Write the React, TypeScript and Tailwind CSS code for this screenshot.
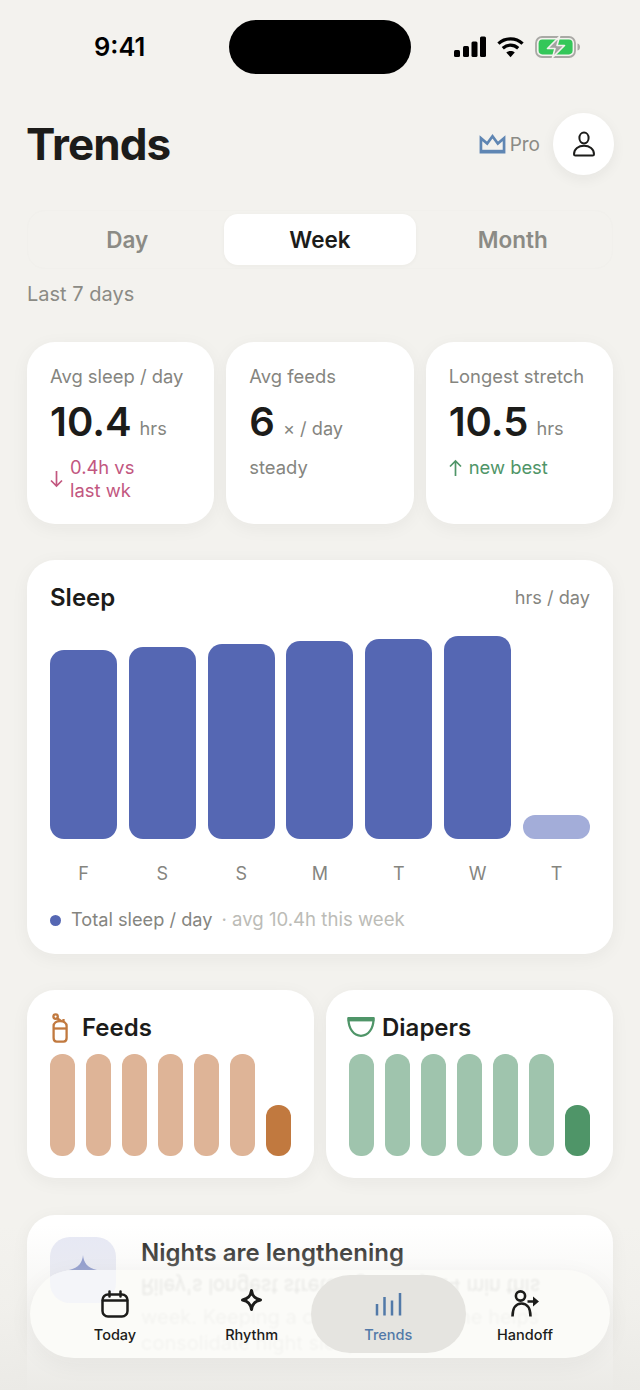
import React from "react";

const sleepBars = [
  { l: "F", h: 189 },
  { l: "S", h: 192 },
  { l: "S", h: 195 },
  { l: "M", h: 198 },
  { l: "T", h: 200 },
  { l: "W", h: 203 },
  { l: "T", h: 24 },
];

function Stat({ label, value, unit, children }: { label: string; value: string; unit: string; children: React.ReactNode }) {
  return (
    <div className="h-[182px] rounded-[28px] bg-white pl-[23px] pr-2 pt-[22px] shadow-[0_4px_18px_rgba(40,40,30,0.05)]">
      <div className="text-[18.4px] leading-6 text-[#85857f] whitespace-nowrap">{label}</div>
      <div className="mt-[12px] flex h-[44px] items-baseline gap-2 whitespace-nowrap">
        <span className="text-[40px] font-semibold leading-[44px] text-[#1c1c1a]">{value}</span>
        <span className="relative top-[-1px] text-[18.2px] text-[#85857f]">{unit}</span>
      </div>
      <div className="mt-[12px] text-[18.4px] leading-[23px]">{children}</div>
    </div>
  );
}

function MiniCard({ title, icon, light, dark }: { title: string; icon: React.ReactNode; light: string; dark: string }) {
  return (
    <div className="h-[188px] rounded-[28px] bg-white px-[23px] pt-[22px] shadow-[0_4px_18px_rgba(40,40,30,0.05)]">
      <div className="flex h-[32px] items-center gap-2">
        {icon}
        <span className="text-[24px] font-semibold leading-8 text-[#1c1c1a]">{title}</span>
      </div>
      <div className="mt-[10px] flex h-[102px] items-end justify-between">
        {[0, 1, 2, 3, 4, 5].map((i) => (
          <div key={i} className="h-[102px] w-[25px] rounded-[12px]" style={{ backgroundColor: light }} />
        ))}
        <div className="h-[51px] w-[25px] rounded-[12px]" style={{ backgroundColor: dark }} />
      </div>
    </div>
  );
}

function NavItem({ label, active, children }: { label: string; active?: boolean; children: React.ReactNode }) {
  return (
    <div className="relative z-10 flex w-[136px] flex-col items-center">
      <div className="flex h-[41px] items-center justify-center">{children}</div>
      <span className={"mt-[1px] text-[14.5px] font-medium leading-5 " + (active ? "text-[#5279a8]" : "text-[#1c1c1a]")}>{label}</span>
    </div>
  );
}

export default function App() {
  return (
    <div
      className="relative h-[1390px] w-[640px] overflow-hidden bg-[#f3f2ee] antialiased"
      style={{ fontFamily: "Inter, 'Liberation Sans', sans-serif" }}
    >
      <div className="px-[27px]">
        {/* status bar */}
        <div className="relative mt-5 flex h-[54px] items-center justify-between">
          <span className="ml-[67px] text-[25.5px] font-semibold leading-none text-black">9:41</span>
          <div className="absolute left-[202px] top-0 h-[54px] w-[182px] rounded-[27px] bg-black" />
          <div className="mr-[32px] flex items-center gap-[11px]">
            <svg width="32" height="22" viewBox="0 0 32 22" fill="#000">
              <rect x="0" y="14" width="6" height="7" rx="1.5" />
              <rect x="9" y="10" width="6" height="11" rx="1.5" />
              <rect x="17.5" y="5.5" width="6" height="15.5" rx="1.5" />
              <rect x="26" y="0.5" width="6" height="20.5" rx="1.5" />
            </svg>
            <svg width="27" height="22" viewBox="0 0 28 22" fill="none" stroke="#000" strokeWidth="3.4">
              <path d="M1.5 7.5C8.5 1 19.5 1 26.5 7.5" />
              <path d="M6 12.2C10.8 8 17.2 8 22 12.2" />
              <path d="M14 21.5L9.6 16.6C12 14.6 16 14.6 18.4 16.6Z" fill="#000" stroke="none" />
            </svg>
            <svg width="46" height="22" viewBox="0 0 46 22" fill="none">
              <rect x="1" y="1" width="39" height="20" rx="6" stroke="#a9a9a5" strokeWidth="1.8" />
              <rect x="3.6" y="3.6" width="34" height="14.8" rx="3.8" fill="#34c759" />
              <path d="M42.5 7.5C44.5 8 45 9.5 45 11s-.5 3-2.5 3.5Z" fill="#a9a9a5" />
              <path d="M24.5 0.5L12.5 12.5H20L17.5 21.5L29.5 9.5H22Z" fill="#a3a3a0" stroke="#f3f2ee" strokeWidth="1.6" strokeLinejoin="round" />
            </svg>
          </div>
        </div>

        {/* header */}
        <div className="mt-[39px] flex h-[62px] items-center justify-between">
          <h1 className="ml-[-1px] text-[44px] font-bold leading-none tracking-[-0.9px] text-[#1c1c1a]">Trends</h1>
          <div className="mr-[-1px] flex items-center">
            <svg width="27" height="22" viewBox="0 0 28 22" fill="none" stroke="#5f86b3" strokeWidth="2.8" strokeLinejoin="miter">
              <path d="M2 5V19.5H26V5L19.5 10.5L14 3L8.5 10.5Z" />
              <path d="M2 18.5H26" strokeWidth="3" />
            </svg>
            <span className="ml-[4px] text-[19px] leading-none text-[#8b8b85]">Pro</span>
            <div className="ml-[13px] flex h-[62px] w-[61px] items-center justify-center rounded-full bg-white shadow-[0_4px_14px_rgba(40,40,30,0.06)]">
              <svg width="24" height="26" viewBox="0 0 24 26" fill="none" stroke="#1c1c1a" strokeWidth="2">
                <ellipse cx="12" cy="7" rx="4.6" ry="5.4" />
                <path d="M2 23.2C2 18 6.5 14.8 12 14.8S22 18 22 23.2C22 24 21.5 24.6 20.6 24.6H3.4C2.5 24.6 2 24 2 23.2Z" />
              </svg>
            </div>
          </div>
        </div>

        {/* segmented */}
        <div className="mt-[35px] grid h-[59px] grid-cols-3 rounded-[18px] border border-[#f1f0ec] p-[3px]">
          <div className="flex items-center justify-center text-[22.5px] font-semibold text-[#8b8b85]">Day</div>
          <div className="flex items-center justify-center rounded-[14px] bg-white text-[22.5px] font-semibold text-[#1c1c1a] shadow-[0_1px_4px_rgba(40,40,30,0.04)]">Week</div>
          <div className="flex items-center justify-center text-[22.5px] font-semibold text-[#8b8b85]">Month</div>
        </div>

        <div className="mt-[11px] text-[20px] leading-7 text-[#8b8b85]">Last 7 days</div>

        {/* stats */}
        <div className="mt-[34px] grid grid-cols-3 gap-3">
          <Stat label="Avg sleep / day" value="10.4" unit="hrs">
            <div className="flex items-center gap-[7px] text-[#c2577f]">
              <svg width="13" height="18" viewBox="0 0 13 18" fill="none" stroke="#c2577f" strokeWidth="1.7">
                <path d="M6.5 1V16M1 10.5L6.5 16L12 10.5" />
              </svg>
              <span className="block">0.4h vs<br />last wk</span>
            </div>
          </Stat>
          <Stat label="Avg feeds" value="6" unit="× / day">
            <span className="text-[#85857f]">steady</span>
          </Stat>
          <Stat label="Longest stretch" value="10.5" unit="hrs">
            <div className="flex items-center gap-[7px] text-[#4f9568]">
              <svg width="13" height="18" viewBox="0 0 13 18" fill="none" stroke="#4f9568" strokeWidth="1.7">
                <path d="M6.5 17V2M1 7.5L6.5 2L12 7.5" />
              </svg>
              <span>new best</span>
            </div>
          </Stat>
        </div>

        {/* sleep card */}
        <div className="mt-9 h-[394px] rounded-[28px] bg-white px-[23px] pt-[22px] shadow-[0_4px_18px_rgba(40,40,30,0.05)]">
          <div className="flex h-8 items-center justify-between">
            <span className="text-[24px] font-semibold text-[#1c1c1a]">Sleep</span>
            <span className="text-[18.2px] text-[#85857f]">hrs / day</span>
          </div>
          <div className="mt-[22px] flex h-[203px] items-end justify-between">
            {sleepBars.map((b, i) => (
              <div
                key={i}
                className={"w-[67px] rounded-[14px] " + (i === 6 ? "bg-[#a3add9] rounded-[12px]" : "bg-[#5567b3]")}
                style={{ height: b.h }}
              />
            ))}
          </div>
          <div className="mt-[23px] flex justify-between">
            {sleepBars.map((b, i) => (
              <span key={i} className="w-[67px] text-center text-[18px] leading-6 text-[#85857f]">{b.l}</span>
            ))}
          </div>
          <div className="mt-[22px] flex h-6 items-center whitespace-nowrap text-[18.2px]">
            <span className="h-[11px] w-[11px] rounded-full bg-[#5567b3]" />
            <span className="ml-[10px] text-[#85857f]">Total sleep / day</span>
            <span className="ml-[9px] text-[18.6px] text-[#bcbcb7]">· avg 10.4h this week</span>
          </div>
        </div>

        {/* mini cards */}
        <div className="mt-9 grid grid-cols-2 gap-3">
          <MiniCard
            title="Feeds"
            light="#deb497"
            dark="#c1793f"
            icon={
              <svg className="ml-[2px] mr-[6px]" width="16" height="30" viewBox="0 0 16 30" fill="none" stroke="#c1793f" strokeWidth="2.3">
                <circle cx="3.6" cy="3.6" r="2.2" />
                <path d="M5.5 5.5L9 8" />
                <path d="M11.5 6V9" />
                <path d="M1.6 13C1.6 10 4.5 8 8 8S14.6 10 14.6 13V25C14.6 27.5 13 28.6 11.5 28.6H4.7C3.2 28.6 1.6 27.5 1.6 25Z" />
                <path d="M1.6 15.5H14.6" />
              </svg>
            }
          />
          <MiniCard
            title="Diapers"
            light="#9fc4ad"
            dark="#4f9568"
            icon={
              <svg className="ml-[-2px] mr-[-1px] mt-[-3px]" width="28" height="20" viewBox="0 0 28 20" fill="none" stroke="#4f9568" strokeWidth="2.2">
                <path d="M1.5 2H26.5C26.5 11.5 21.5 18.8 14 18.8S1.5 11.5 1.5 2Z" />
                <path d="M0.5 2.2H27.5" strokeWidth="4.4" />
              </svg>
            }
          />
        </div>

        {/* insight */}
        <div className="mt-[37px] h-[210px] rounded-[28px] bg-white pl-[23px] pr-[24px] pt-[22px] shadow-[0_4px_18px_rgba(40,40,30,0.05)]">
          <div className="flex gap-[25px]">
            <div className="flex h-[66px] w-[66px] shrink-0 items-center justify-center rounded-[20px] bg-[#e6e8f5]">
              <svg width="30" height="32" viewBox="0 0 30 32" fill="#7483c4">
                <path d="M15 1C15.5 8 19 14 29 16C19 18 15.5 24 15 31C14.5 24 11 18 1 16C11 14 14.5 8 15 1Z" />
              </svg>
            </div>
            <div className="text-[24px] font-semibold leading-8 text-[#1c1c1a]">Nights are lengthening</div>
          </div>
        </div>
      </div>

      {/* bottom fade */}
      <div className="pointer-events-none absolute inset-x-0 bottom-0 h-[165px] bg-gradient-to-b from-[#f3f2ee00] via-[#efeeea99] to-[#ebeae6fa]" />

      {/* floating nav */}
      <div className="absolute left-[30px] top-[1270px] flex h-[88px] w-[580px] items-center justify-between overflow-hidden rounded-[44px] bg-[#fbfbf8] px-[17px] shadow-[0_6px_24px_rgba(40,40,30,0.05)]">
        <div className="absolute left-[20px] top-[-33px] h-[66px] w-[66px] rounded-[20px] bg-[#f1f2fa] opacity-70" />
        <div
          className="absolute left-[111px] top-[4px] origin-center whitespace-nowrap text-[20px] leading-[26px] text-[#1c1c1a] opacity-[0.08] blur-[1px]"
          style={{ transform: "scaleY(-1.1)" }}
        >
          Riley's longest stretch grew by 24 min this
        </div>
        <div className="absolute left-[111px] top-[34px] whitespace-nowrap text-[20px] leading-[26px] text-[#1c1c1a] opacity-[0.03] blur-[1px]">
          week. Keeping a consistent bedtime helps
          <br />
          consolidate night sleep
        </div>
        <div className="absolute left-[281px] top-[5px] h-[78px] w-[155px] rounded-[39px] bg-[#e5e4e0]" />
        <NavItem label="Today">
          <svg width="28" height="28" viewBox="0 0 28 28" fill="none" stroke="#1c1c1a" strokeWidth="2.5" strokeLinecap="round">
            <rect x="1.5" y="4.5" width="25" height="22" rx="5.5" />
            <path d="M2 10.5H26M8.5 1.5V6.5M19.5 1.5V6.5" />
          </svg>
        </NavItem>
        <NavItem label="Rhythm">
          <svg width="23" height="24" viewBox="0 0 23 24" fill="none" stroke="#1c1c1a" strokeWidth="3" strokeLinejoin="round" className="mt-[-7px]">
            <path d="M11.5 2.5C12.4 8 14.5 10.8 20.5 12C14.5 13.2 12.4 16 11.5 21.5C10.6 16 8.5 13.2 2.5 12C8.5 10.8 10.6 8 11.5 2.5Z" />
          </svg>
        </NavItem>
        <NavItem label="Trends" active>
          <svg width="27" height="24" viewBox="0 0 27 24" fill="none" stroke="#5279a8" strokeWidth="2.5">
            <path d="M2 12V23.5M9.5 5V23.5M17 8.5V23.5M25 1V23.5" />
          </svg>
        </NavItem>
        <NavItem label="Handoff">
          <svg width="28" height="27" viewBox="0 0 28 27" fill="none" stroke="#1c1c1a" strokeWidth="2.6">
            <circle cx="9.5" cy="6" r="4.6" />
            <path d="M1.5 26.5C1.5 18 5 13.5 10.5 13.5S19.5 18 19.5 26.5" />
            <path d="M16.5 11.5H24" />
            <path d="M22 6.5L28 11.5L22 16.5Z" fill="#1c1c1a" stroke="none" />
          </svg>
        </NavItem>
      </div>
    </div>
  );
}
